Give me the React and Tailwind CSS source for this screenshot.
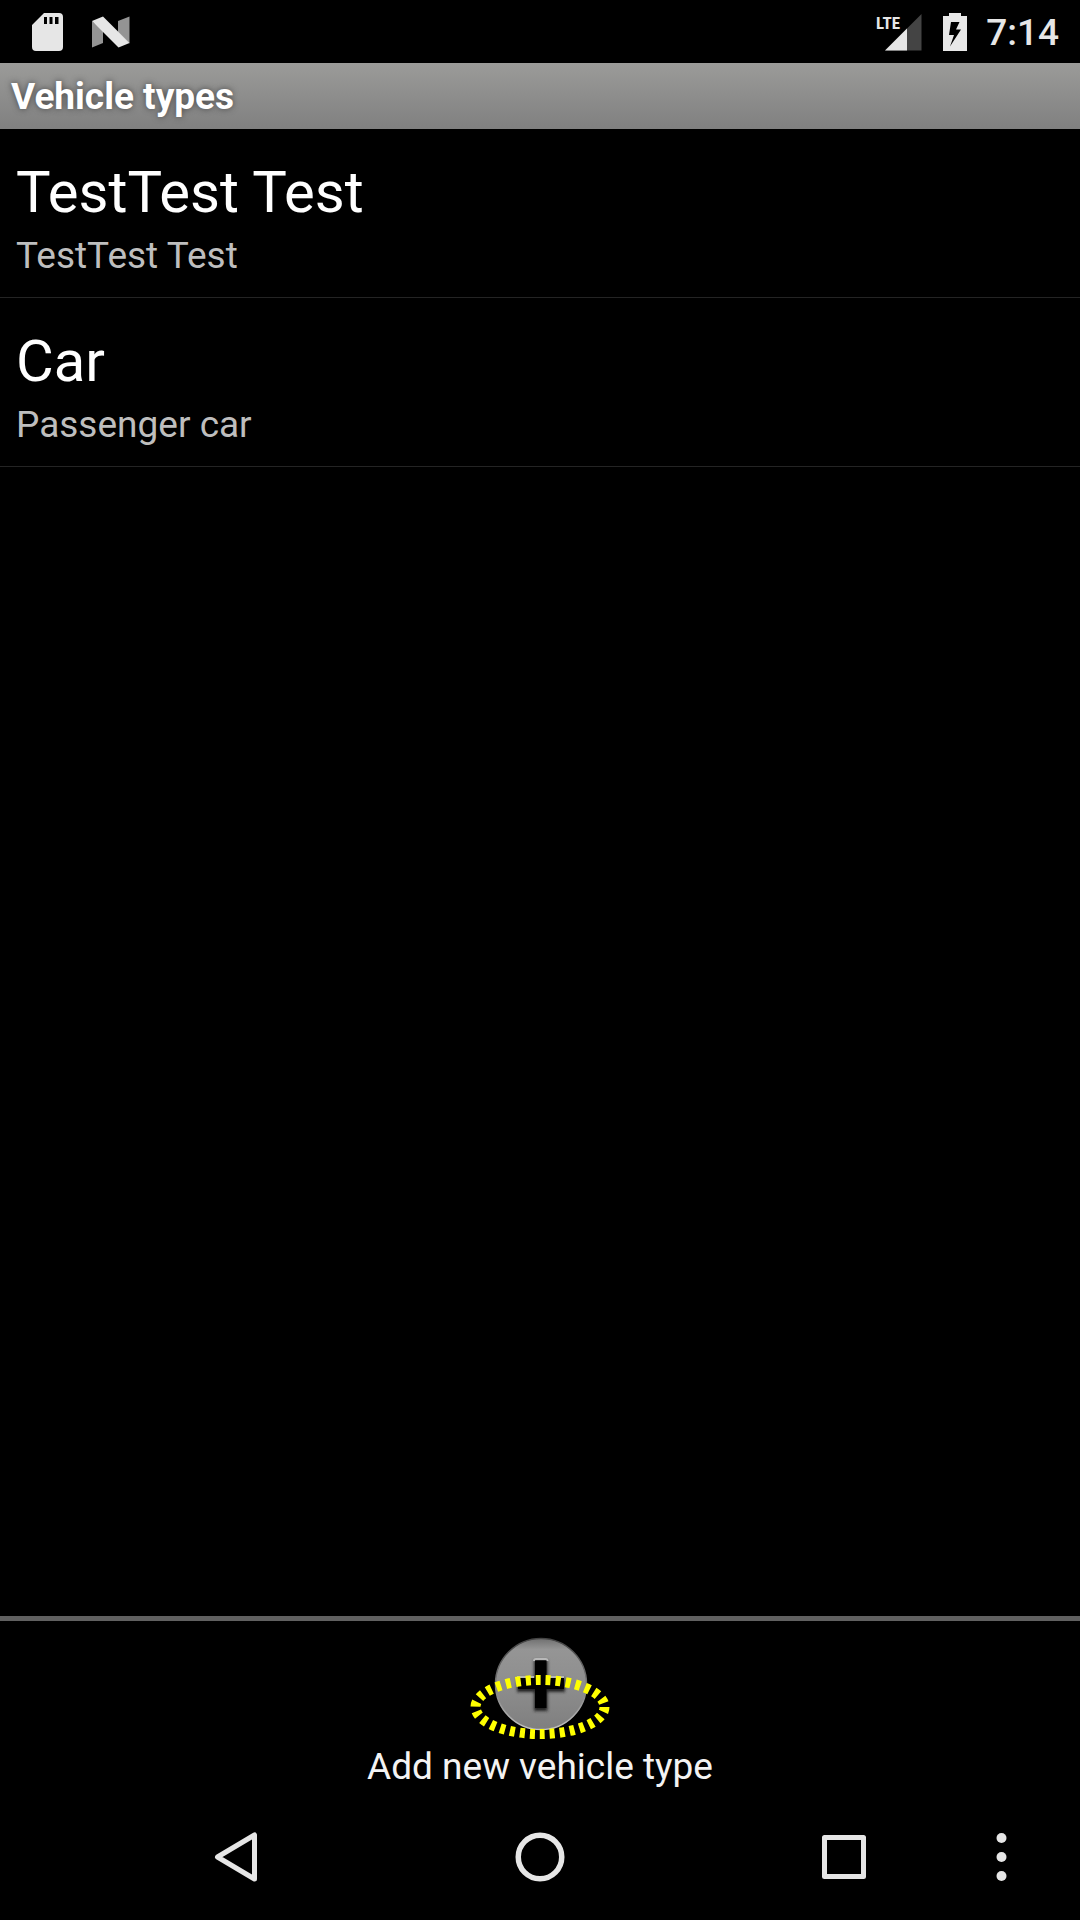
import React from "react";

const vehicleTypes = [
  { name: "TestTest Test", description: "TestTest Test" },
  { name: "Car", description: "Passenger car" },
];

function StatusBar() {
  return (
    <div className="flex h-[63px] shrink-0 items-center justify-between pr-[21px] pl-8">
      <div className="flex items-center gap-7">
        <svg width="32" height="38" viewBox="0 0 32 38" role="img" aria-label="SD card">
          <path
            fillRule="evenodd"
            fill="#e6e6e6"
            d="M12 0H27Q31 0 31 4V34Q31 38 27 38H4Q0 38 0 34V12ZM12 4V11H15V4ZM17.500 4V11H20.500V4ZM23 4V11H26.500V4Z"
          />
        </svg>
        <svg width="38" height="38" viewBox="0 0 38 38" role="img" aria-label="System notification">
          <path fill="#949494" d="M0 8L11 17.500V30L0 34.500Z" />
          <path fill="#949494" d="M26 8L37.500 3.500V30.500L26 19.500Z" />
          <path fill="#e6e6e6" d="M0 8L11 3.500L37.500 30L26.500 34.500Z" />
        </svg>
      </div>
      <div className="flex items-center">
        <svg width="46" height="38" viewBox="0 0 46 38" role="img" aria-label="LTE signal">
          <path fill="#444444" d="M45.500 1V37.500H9Z" />
          <path fill="#e6e6e6" d="M31 15.500V37.500H9Z" />
          <text
            x="0"
            y="16"
            fill="#e6e6e6"
            className="font-['Roboto_Condensed','Liberation_Sans_Narrow','Roboto',sans-serif] text-[17px] font-bold"
          >
            LTE
          </text>
        </svg>
        <svg className="ml-[21px]" width="24" height="38" viewBox="0 0 24 38" role="img" aria-label="Battery charging">
          <path
            fillRule="evenodd"
            fill="#e8e8e8"
            d="M6 0H18V3H24V38H0V3H6ZM8 9L6 22H11L7 33.500L18 16.500H13L16.500 9Z"
          />
        </svg>
        <time className="ml-[19px] pt-0.5 text-[37px] leading-[42px] font-medium text-[#e6e6e6]">7:14</time>
      </div>
    </div>
  );
}

function AddIcon() {
  return (
    <svg className="block" width="140" height="108" viewBox="0 0 140 108" aria-hidden="true">
      <defs>
        <linearGradient id="disc" x1="0" y1="0" x2="0" y2="1">
          <stop offset="0" stopColor="#707070" />
          <stop offset="0.120" stopColor="#959595" />
          <stop offset="0.500" stopColor="#8e8e8e" />
          <stop offset="1" stopColor="#7f7f7f" />
        </linearGradient>
        <linearGradient id="rim" x1="0" y1="0" x2="0" y2="1">
          <stop offset="0" stopColor="#444444" />
          <stop offset="0.500" stopColor="#777777" />
          <stop offset="1" stopColor="#c4c4c4" />
        </linearGradient>
        <filter id="soft" x="-20%" y="-20%" width="140%" height="140%">
          <feGaussianBlur stdDeviation="1.800" />
        </filter>
      </defs>
      <circle cx="71" cy="52" r="45.500" fill="url(#disc)" stroke="url(#rim)" strokeWidth="1.500" />
      <path d="M64 28H77.500V46H95V60H77.500V79H64V60H47V46H64Z" fill="#222222" filter="url(#soft)" />
      <path d="M64 29Q64 27 66 27H75.500Q77.500 27 77.500 29M47 45H64M77.500 45H94" fill="none" stroke="#b8b8b8" strokeWidth="2" />
      <path d="M65 28.500H76.500V46H94V57H76.500V76H65V57H48V46H65Z" fill="#000000" />
      <ellipse cx="70" cy="75" rx="64.500" ry="27" fill="none" stroke="#ffff00" strokeWidth="10" strokeDasharray="5 5" />
    </svg>
  );
}

function NavigationBar() {
  return (
    <nav className="flex h-[126px] shrink-0 items-stretch pl-[84px]" aria-label="System navigation">
      <button type="button" aria-label="Back" className="flex flex-1 items-center justify-center">
        <svg width="44" height="50" viewBox="0 0 44 50" fill="none" stroke="#e6e6e6" strokeWidth="5" strokeLinejoin="round">
          <path d="M40.500 3V47L3.500 25Z" />
        </svg>
      </button>
      <button type="button" aria-label="Home" className="flex flex-1 items-center justify-center">
        <svg width="50" height="50" viewBox="0 0 50 50" fill="none" stroke="#e6e6e6" strokeWidth="5.500">
          <circle cx="25" cy="25" r="21.750" />
        </svg>
      </button>
      <button type="button" aria-label="Recent apps" className="flex flex-1 items-center justify-center">
        <svg width="44" height="44" viewBox="0 0 44 44" fill="none" stroke="#e6e6e6" strokeWidth="5" strokeLinejoin="round">
          <path d="M2.500 2.500H41.500V41.500H2.500Z" />
        </svg>
      </button>
      <button type="button" aria-label="More options" className="flex w-[84px] items-center justify-start">
        <svg width="12" height="50" viewBox="0 0 12 50" fill="#e6e6e6">
          <circle cx="5.500" cy="6" r="5" />
          <circle cx="5.500" cy="25" r="5" />
          <circle cx="5.500" cy="44" r="5" />
        </svg>
      </button>
    </nav>
  );
}

export default function App() {
  return (
    <div className="flex min-h-screen flex-col bg-black font-['Roboto',sans-serif] text-white">
      <StatusBar />
      <header className="h-[66px] shrink-0 bg-linear-to-b from-[#9b9b99] to-[#808080] px-[11px] pt-[13px]">
        <h1 className="text-[37px] leading-[42px] font-bold text-white [text-shadow:0_0_6px_#444444]">Vehicle types</h1>
      </header>
      <main className="flex-1">
        <ul>
          {vehicleTypes.map((type) => (
            <li key={type.name} className="border-b border-[#242424] px-4 pt-6 pb-4">
              <h2 className="text-[58px] leading-[78px]">{type.name}</h2>
              <p className="text-[37px] leading-[50px] text-[#bebebe]">{type.description}</p>
            </li>
          ))}
        </ul>
      </main>
      <footer className="shrink-0 border-t-[5px] border-[#606060]">
        <button type="button" className="flex h-[173px] w-full flex-col items-center pt-[11px]">
          <AddIcon />
          <span className="text-[37px] leading-[54px] text-[#f3f3f3]">Add new vehicle type</span>
        </button>
      </footer>
      <NavigationBar />
    </div>
  );
}
